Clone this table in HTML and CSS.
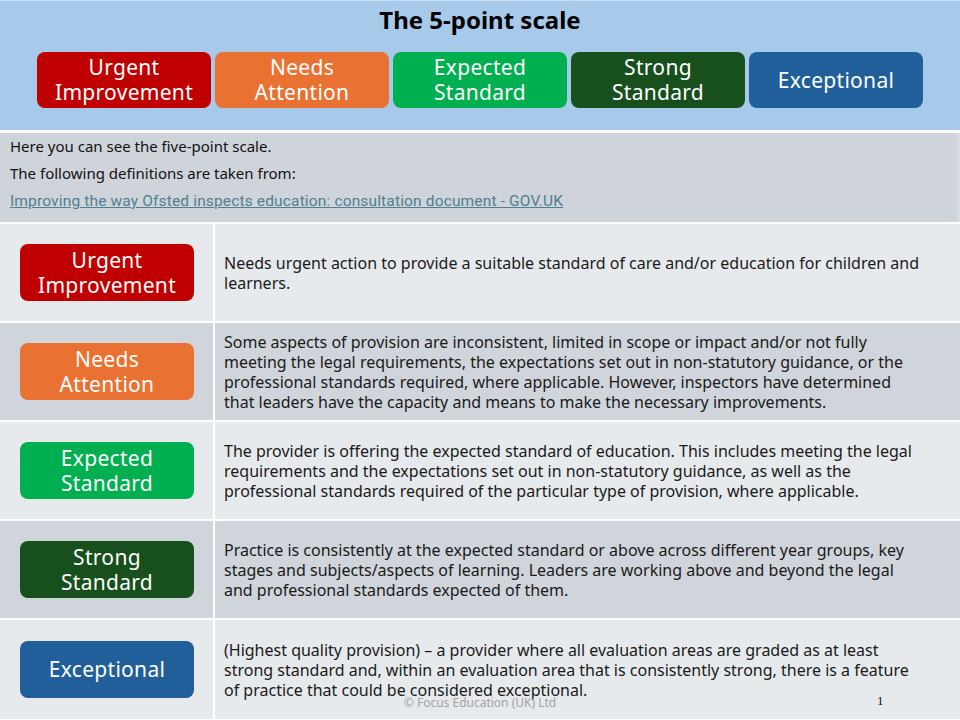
FILE: index.html
```html
<!DOCTYPE html>
<html lang="en">
<head>
<meta charset="utf-8">
<title>The 5-point scale</title>
<link rel="stylesheet" href="styles.css">
</head>
<body>
<div class="slide">
  <header class="top">
    <h1 class="title">The 5-point scale</h1>
    <div class="scale">
      <div class="badge urgent">Urgent<br>Improvement</div>
      <div class="badge needs">Needs<br>Attention</div>
      <div class="badge expected">Expected<br>Standard</div>
      <div class="badge strong">Strong<br>Standard</div>
      <div class="badge exceptional">Exceptional</div>
    </div>
  </header>
  <section class="intro">
    <p>Here you can see the five-point scale.</p>
    <p>The following definitions are taken from:</p>
    <p><a class="link" href="#">Improving the way Ofsted inspects education: consultation document - GOV.UK</a></p>
  </section>
  <div class="table">
    <div class="row light">
      <div class="cell-badge"><div class="badge urgent">Urgent<br>Improvement</div></div>
      <div class="cell-text">Needs urgent action to provide a suitable standard of care and/or education for children and learners.</div>
    </div>
    <div class="row dark">
      <div class="cell-badge"><div class="badge needs">Needs<br>Attention</div></div>
      <div class="cell-text">Some aspects of provision are inconsistent, limited in scope or impact and/or not fully meeting the legal requirements, the expectations set out in non-statutory guidance, or the professional standards required, where applicable. However, inspectors have determined that leaders have the capacity and means to make the necessary improvements.</div>
    </div>
    <div class="row light">
      <div class="cell-badge"><div class="badge expected">Expected<br>Standard</div></div>
      <div class="cell-text">The provider is offering the expected standard of education. This includes meeting the legal requirements and the expectations set out in non-statutory guidance, as well as the professional standards required of the particular type of provision, where applicable.</div>
    </div>
    <div class="row dark">
      <div class="cell-badge"><div class="badge strong">Strong<br>Standard</div></div>
      <div class="cell-text">Practice is consistently at the expected standard or above across different year groups, key stages and subjects/aspects of learning. Leaders are working above and beyond the legal and professional standards expected of them.</div>
    </div>
    <div class="row light last">
      <div class="cell-badge"><div class="badge exceptional">Exceptional</div></div>
      <div class="cell-text">(Highest quality provision) – a provider where all evaluation areas are graded as at least strong standard and, within an evaluation area that is consistently strong, there is a feature of practice that could be considered exceptional.</div>
    </div>
  </div>
  <div class="copyright">© Focus Education (UK) Ltd</div>
  <div class="pagenum">1</div>
</div>
</body>
</html>
```
FILE: styles.css
```css
* { box-sizing: border-box; }
html, body { margin: 0; padding: 0; }
body {
  background: #ffffff;
  font-family: "Noto Sans", "DejaVu Sans", sans-serif;
  color: #111;
}
.slide {
  position: relative;
  width: 960px;
  height: 720px;
  overflow: hidden;
  display: flex;
  flex-direction: column;
}
.top {
  background: #a7c9ea;
  height: 130px;
  border-top: 1px solid #c6dcf1;
  display: flex;
  flex-direction: column;
  align-items: center;
}
.title {
  margin: 3px 0 0;
  font-size: 24px;
  line-height: 32px;
  font-weight: 700;
  color: #000;
}
.scale {
  display: flex;
  gap: 4px;
  margin-top: 16px;
}
.badge {
  width: 174px;
  height: 56px;
  border-radius: 8px;
  color: #fff;
  font-size: 21px;
  line-height: 25px;
  letter-spacing: 0.3px;
  text-align: center;
  display: flex;
  align-items: center;
  justify-content: center;
}
.urgent { background: #c00000; }
.needs { background: #e97132; }
.expected { background: #00b050; }
.strong { background: #17501c; }
.exceptional { background: #215f9a; }

.intro {
  margin-top: 3px;
  background: #cfd4da;
  height: 89px;
  padding: 0 10px;
  border-right: 3px solid #d9dde1;
}
.intro p {
  margin: 0;
  font-size: 15px;
  line-height: 27px;
}
.link {
  font-family: Roboto, "Noto Sans", sans-serif;
  font-size: 15.5px;
  color: #4f7f91;
  text-decoration: underline;
  letter-spacing: 0.15px;
}

.table {
  margin-top: 2px;
  display: flex;
  flex-direction: column;
  gap: 2px;
  flex: 1;
}
.row {
  display: flex;
  height: 97px;
  gap: 2px;
}
.row.last { height: 99px; }
.light > div { background: #e7eaed; }
.dark > div { background: #d0d5db; }
.cell-badge {
  width: 213px;
  flex: none;
  display: flex;
  align-items: center;
  padding-left: 20px;
}
.cell-badge .badge { height: 57px; }
.cell-text {
  flex: 1;
  display: flex;
  align-items: center;
  padding: 0 36px 0 9px;
  font-size: 16px;
  line-height: 20px;
  color: #1a1a1a;
}
.copyright {
  position: absolute;
  left: 0;
  right: 0;
  top: 696px;
  text-align: center;
  font-size: 12px;
  line-height: 14px;
  color: #a3a3a3;
}
.pagenum {
  position: absolute;
  left: 877px;
  top: 694px;
  font-family: "Liberation Serif", serif;
  font-size: 13px;
  line-height: 14px;
  color: #111;
}
```
